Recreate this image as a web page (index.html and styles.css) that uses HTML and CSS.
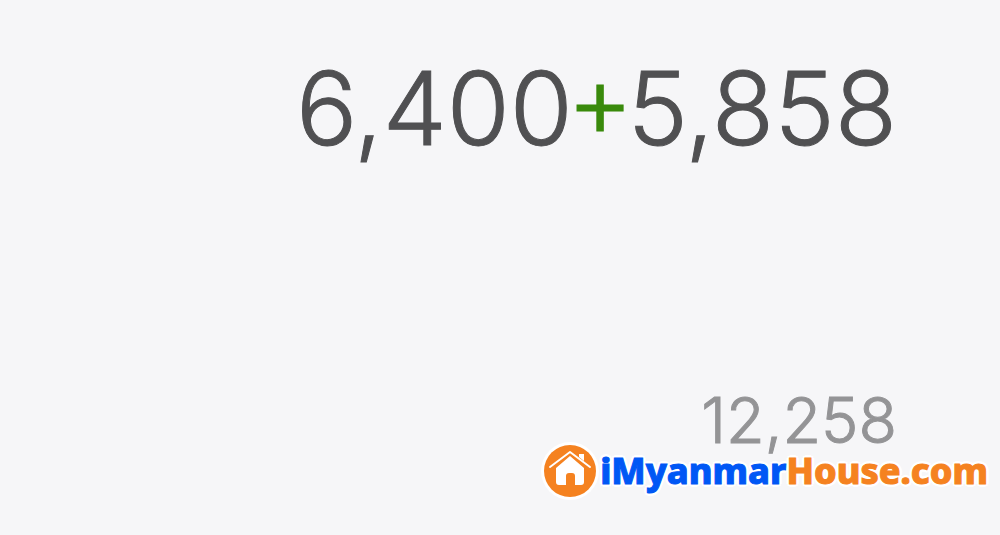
FILE: index.html
```html
<!DOCTYPE html>
<html lang="en">
<head>
    <meta charset="UTF-8">
    <meta name="viewport" content="width=device-width, initial-scale=1.0">
    <title>Calculator</title>
    <link rel="stylesheet" href="styles.css">
</head>
<body>
    <main class="display">
        <div class="expression">6,400<span class="operator">+</span>5,858</div>
        <div class="result">12,258</div>
    </main>

    <div class="watermark">
        <svg class="logo" viewBox="0 0 58 58" aria-hidden="true">
            <circle cx="29" cy="29" r="29" fill="#fff"/>
            <circle cx="29" cy="29" r="26" fill="#f58220"/>
            <path d="M9 25 L29 10 L49 25" fill="none" stroke="#fff" stroke-width="2" stroke-linecap="round" stroke-linejoin="round"/>
            <path d="M38 12 H43 V19 L38 15 Z" fill="#fff"/>
            <path d="M15 26 L29 14 L43 26 V40 Q43 43 40 43 H34 V34 Q34 31 31 31 H28 Q25 31 25 34 V43 H18 Q15 43 15 40 Z" fill="#fff"/>
        </svg>
        <span class="brand"><span class="brand-blue">iMyanmar</span><span class="brand-orange">House.com</span></span>
    </div>
</body>
</html>
```
FILE: styles.css
```css
body {
    margin: 0;
    min-height: 100vh;
    background-color: #f6f6f8;
    font-family: Inter, sans-serif;
}
.display {
    display: flex;
    flex-direction: column;
    align-items: flex-end;
    padding: 48px 103px 0 0;
}
.expression {
    font-size: 102px;
    line-height: 120px;
    font-weight: 300;
    color: #505052;
    -webkit-text-stroke: 1px;
}
.operator {
    margin: 0 -6px;
    line-height: 96px;
    vertical-align: 8px;
    color: #3a8a0c;
}
.result {
    margin-top: 212px;
    font-size: 63px;
    line-height: 80px;
    font-weight: 300;
    color: #949496;
    -webkit-text-stroke: 1px;
}
.watermark {
    position: absolute;
    right: 12px;
    bottom: 35px;
    display: flex;
    align-items: center;
    gap: 1px;
}
.logo {
    width: 58px;
    height: 58px;
}
.brand {
    font-family: "Noto Sans", sans-serif;
    font-size: 36px;
    line-height: 48px;
    font-weight: 800;
    -webkit-text-stroke: 1px;
    text-shadow: 3px 0 #fff, -3px 0 #fff, 0 3px #fff, 0 -3px #fff, 2px 2px #fff, -2px 2px #fff, 2px -2px #fff, -2px -2px #fff;
}
.brand-blue {
    color: #0057f5;
}
.brand-orange {
    color: #f58220;
}
```
